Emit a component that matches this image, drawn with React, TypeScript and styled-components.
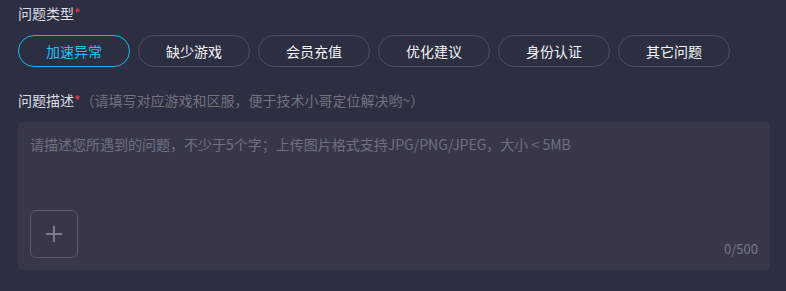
import React, { useState } from "react";
import styled, { createGlobalStyle } from "styled-components";

const Global = createGlobalStyle`
  html, body { margin: 0; padding: 0; background: #2c2e41; }
  body { font-family: "Noto Sans CJK SC", "Noto Sans", sans-serif; }
  * { box-sizing: border-box; }
`;

const Page = styled.div`
  width: 786px;
  height: 291px;
  background: #2c2e41;
  padding: 3px 16px 0 18px;
  display: flex;
  flex-direction: column;
`;

const Label = styled.div`
  font-size: 14px;
  line-height: 20px;
  color: #dcdde6;
  display: flex;
  align-items: center;
`;

const Star = styled.span`
  color: #f2394a;
`;

const Hint = styled.span`
  color: #71737f;
`;

const ChipRow = styled.div`
  display: flex;
  gap: 8px;
  margin-top: 12px;
`;

const Chip = styled.button<{ $active?: boolean }>`
  width: 112px;
  height: 32px;
  border-radius: 16px;
  background: transparent;
  border: 1px solid ${(p) => (p.$active ? "#15b9ea" : "#4d4f63")};
  color: ${(p) => (p.$active ? "#20c4f2" : "#f3f4f8")};
  font-family: inherit;
  font-size: 14px;
  cursor: pointer;
  padding: 0;
  display: flex;
  align-items: center;
  justify-content: center;
`;

const DescLabel = styled(Label)`
  margin-top: 23px;
`;

const Box = styled.div`
  margin-top: 12px;
  width: 752px;
  height: 148px;
  background: #363849;
  border-radius: 4px;
  padding: 12px 12px 12px 12px;
  display: flex;
  flex-direction: column;
  justify-content: space-between;
`;

const Placeholder = styled.div`
  font-size: 14px;
  line-height: 20px;
  color: #6f717f;
`;

const Bottom = styled.div`
  display: flex;
  justify-content: space-between;
  align-items: flex-end;
`;

const Upload = styled.div`
  width: 48px;
  height: 48px;
  border: 1px solid #595b6e;
  border-radius: 6px;
  display: flex;
  align-items: center;
  justify-content: center;
`;

const Counter = styled.div`
  font-size: 13px;
  line-height: 16px;
  color: #777988;
  margin-bottom: 1px;
`;

const types = ["加速异常", "缺少游戏", "会员充值", "优化建议", "身份认证", "其它问题"];

export default function App() {
  const [active, setActive] = useState(0);
  return (
    <>
      <Global />
      <Page>
        <Label>
          问题类型<Star>*</Star>
        </Label>
        <ChipRow>
          {types.map((t, i) => (
            <Chip key={t} $active={i === active} onClick={() => setActive(i)}>
              {t}
            </Chip>
          ))}
        </ChipRow>
        <DescLabel>
          问题描述<Star>*</Star>
          <Hint>（请填写对应游戏和区服，便于技术小哥定位解决哟~）</Hint>
        </DescLabel>
        <Box>
          <Placeholder>
            请描述您所遇到的问题，不少于5个字；上传图片格式支持JPG/PNG/JPEG，大小 &lt; 5MB
          </Placeholder>
          <Bottom>
            <Upload>
              <svg width="18" height="18" viewBox="0 0 18 18">
                <path d="M9 1v16M1 9h16" stroke="#7b7d8c" strokeWidth="2" />
              </svg>
            </Upload>
            <Counter>0/500</Counter>
          </Bottom>
        </Box>
      </Page>
    </>
  );
}
